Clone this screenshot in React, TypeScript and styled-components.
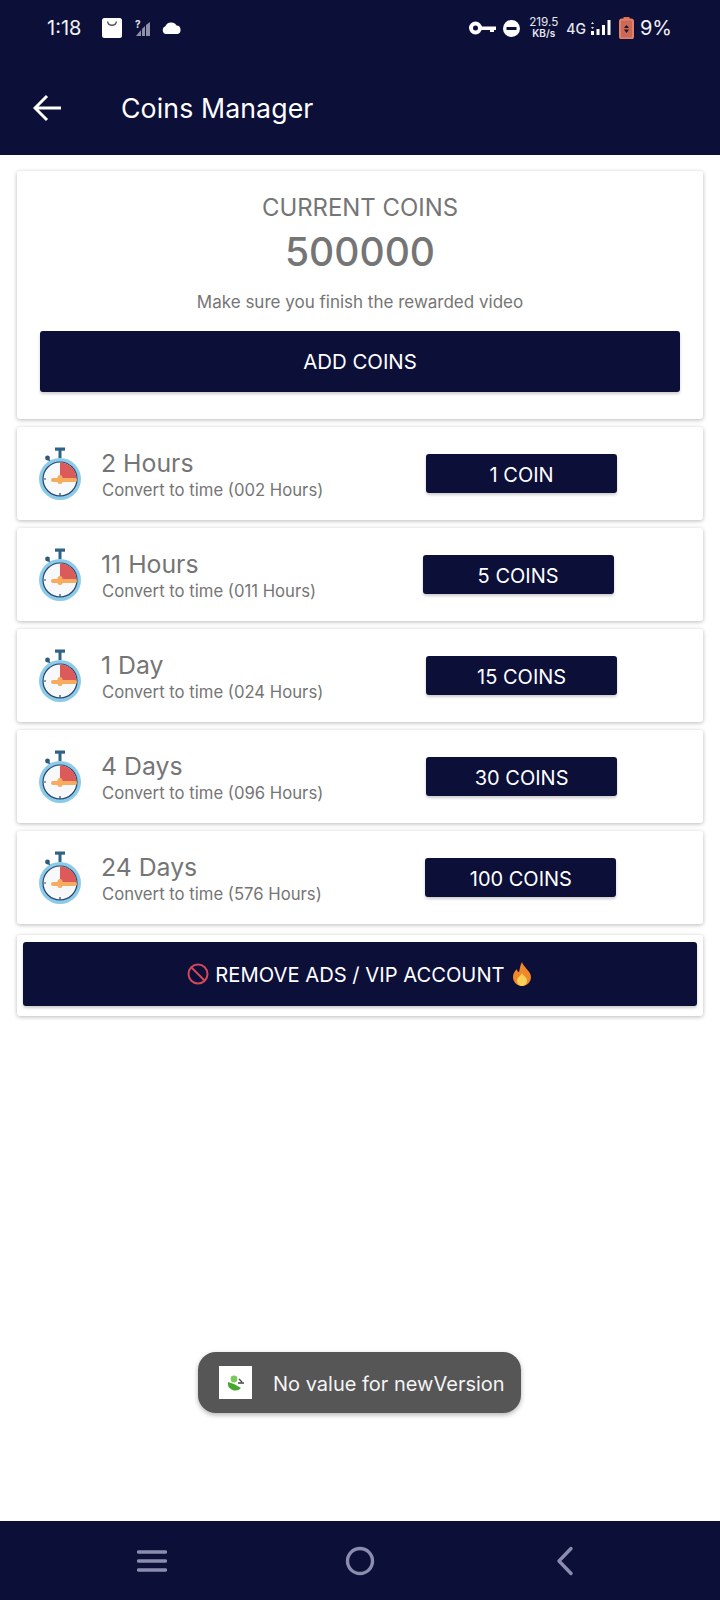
import React from 'react'
import styled, { createGlobalStyle } from 'styled-components'

const NAVY = '#0c0f38'
const GREY = '#757575'

const GlobalStyle = createGlobalStyle`
  html, body { margin: 0; padding: 0; background: #fff; }
  * { box-sizing: border-box; }
`

const Screen = styled.div`
  position: relative;
  width: 720px;
  height: 1600px;
  display: flex;
  flex-direction: column;
  background: #fff;
  font-family: Inter, "Liberation Sans", sans-serif;
`

const Header = styled.header`
  height: 155px;
  background: ${NAVY};
  color: #fff;
`

const StatusBar = styled.div`
  height: 56px;
  padding: 0 48px 0 47px;
  display: flex;
  align-items: center;
  justify-content: space-between;
`

const StatusGroup = styled.div`
  display: flex;
  align-items: center;
`

const Clock = styled.span`
  font-size: 20px;
  width: 55px;
  color: #f2f2f6;
`

const NetSpeed = styled.span`
  display: flex;
  flex-direction: column;
  align-items: center;
  font-size: 11.7px;
  line-height: 11px;
  margin: 0 8px 0 9px;
  color: #e8e8f0;
  small { font-size: 10px; font-weight: 600; }
`

const NetType = styled.span`
  font-size: 14px;
  font-weight: 500;
  color: #e8e8f0;
  margin-right: 4px;
`

const Percent = styled.span`
  font-size: 20px;
  color: #f2f2f6;
  margin-left: 6px;
`

const TitleBar = styled.div`
  height: 99px;
  padding: 5px 0 0 33px;
  display: flex;
  align-items: center;
`

const Title = styled.h1`
  margin: 0 0 0 58px;
  font-size: 26.7px;
  font-weight: 400;
  letter-spacing: 0.1px;
`

const Content = styled.main`
  flex: 1;
  padding: 16px 17px 0;
  display: flex;
  flex-direction: column;
  gap: 8px;
`

const Card = styled.section`
  background: #fff;
  border-radius: 3px;
  box-shadow: 0 1px 4px rgba(0, 0, 0, 0.28);
`

const CoinsCard = styled(Card)`
  height: 248px;
  padding: 22px 23px 0;
  display: flex;
  flex-direction: column;
  align-items: center;
  color: ${GREY};
`

const CoinsLabel = styled.div`
  font-size: 23.9px;
  line-height: 30px;
`

const CoinsValue = styled.div`
  font-size: 39px;
  font-weight: 500;
  line-height: 50px;
  margin-top: 4px;
`

const CoinsHint = styled.div`
  font-size: 17px;
  line-height: 22px;
  margin-top: 14px;
`

const PrimaryButton = styled.button`
  border: 0;
  background: ${NAVY};
  color: #fff;
  border-radius: 3px;
  font-family: Inter, "Liberation Sans", sans-serif;
  font-weight: 400;
  padding: 0;
  display: flex;
  align-items: center;
  justify-content: center;
  box-shadow: 0 2px 3px rgba(0, 0, 0, 0.2);
`

const AddButton = styled(PrimaryButton)`
  width: 100%;
  height: 61px;
  margin-top: 18px;
  font-size: 20.4px;
`

const Row = styled(Card)`
  height: 93px;
  padding: 0 0 0 21px;
  display: flex;
  align-items: center;
`

const RowText = styled.div`
  margin: 2px 0 0 19px;
  color: ${GREY};
`

const RowTitle = styled.div`
  font-size: 24.8px;
  line-height: 31px;
`

const RowSub = styled.div`
  font-size: 16.7px;
  line-height: 23px;
  margin-left: 1px;
`

const RowAction = styled.div`
  flex: 1;
  margin-left: 17px;
  display: flex;
  justify-content: center;
`

const CoinButton = styled(PrimaryButton)`
  width: 191px;
  height: 39px;
  padding-top: 2px;
  font-size: 20px;
`

const VipCard = styled(Card)`
  height: 81px;
  padding: 7px 6px 10px;
  margin-top: 3px;
`

const VipButton = styled(PrimaryButton)`
  width: 100%;
  height: 64px;
  gap: 6px;
  font-size: 20.2px;
`

const Toast = styled.div`
  position: absolute;
  left: 198px;
  top: 1352px;
  width: 323px;
  height: 61px;
  padding: 2px 0 0 21px;
  display: flex;
  align-items: center;
  gap: 21px;
  background: #565656;
  border-radius: 18px;
  color: #f4f4f4;
  font-size: 20px;
  box-shadow: 0 2px 5px rgba(0, 0, 0, 0.3);
`

const ToastIcon = styled.div`
  width: 33px;
  height: 33px;
  margin-top: -2px;
  background: #fff;
  display: flex;
  align-items: center;
  justify-content: center;
`

const NavBar = styled.nav`
  height: 79px;
  background: ${NAVY};
  display: grid;
  grid-template-columns: 303px 114px 295px;
  align-items: center;
  justify-items: center;
`

const StopwatchIcon = () => (
  <svg width="44" height="54" viewBox="0 0 44 54">
    <rect x="17" y="0.5" width="10" height="3.2" fill="#2f6284" />
    <rect x="20.5" y="3" width="3" height="8" fill="#2f6284" />
    <circle cx="9.5" cy="11" r="2.4" fill="#2f5a78" />
    <path d="M9.5 11 L12.5 15" stroke="#2f5a78" strokeWidth="1.6" />
    <circle cx="22" cy="32" r="21" fill="#8ccaea" />
    <circle cx="22" cy="32" r="17" fill="#f6f8fa" stroke="#26466a" strokeWidth="1.2" />
    <path d="M22 15.5 A16.5 16.5 0 0 1 38.5 32 L22 32 Z" fill="#dc5a5a" />
    <path d="M22 46 V49 M6 32 H8 M36 32 H38" stroke="#26466a" strokeWidth="1.2" />
    <path d="M15 33 H37" stroke="#f7ab5e" strokeWidth="4" strokeLinecap="round" />
    <rect x="19.5" y="28" width="5" height="9" rx="2.5" fill="#f7ab5e" />
  </svg>
)

const rows = [
  { title: '2 Hours', sub: 'Convert to time (002 Hours)', coins: '1 COIN' },
  { title: '11 Hours', sub: 'Convert to time (011 Hours)', coins: '5 COINS' },
  { title: '1 Day', sub: 'Convert to time (024 Hours)', coins: '15 COINS' },
  { title: '4 Days', sub: 'Convert to time (096 Hours)', coins: '30 COINS' },
  { title: '24 Days', sub: 'Convert to time (576 Hours)', coins: '100 COINS' },
]

const App: React.FC = () => (
  <Screen>
    <GlobalStyle />
    <Header>
      <StatusBar>
        <StatusGroup>
          <Clock>1:18</Clock>
          <svg width="20" height="20" viewBox="0 0 20 20">
            <rect width="20" height="20" rx="2.5" fill="#fff" />
            <path d="M5.5 3.5 C6.5 8.5 13.5 8.5 14.5 3.5" fill="none" stroke="#555" strokeWidth="1.3" />
          </svg>
          <svg width="16" height="24" viewBox="0 0 16 24" style={{ marginLeft: 13 }}>
            <text x="0" y="12" fontSize="10" fontWeight="700" fill="#e8e8f0" fontFamily="Inter">?</text>
            <path d="M1 20 L6 14 V20 Z" fill="#8f90a8" />
            <path d="M7 20 V13 L10 10 V20 Z" fill="#8f90a8" />
            <path d="M11 20 V9 L15 6 V20 Z" fill="#8f90a8" />
          </svg>
          <svg width="21" height="14" viewBox="0 0 21 14" style={{ marginLeft: 10 }}>
            <path d="M5 13 A4 4 0 0 1 4.4 5.3 A6.2 6.2 0 0 1 15.6 4.6 A4.3 4.3 0 0 1 16.5 13 Z" fill="#fff" />
          </svg>
        </StatusGroup>
        <StatusGroup>
          <svg width="27" height="14" viewBox="0 0 27 14">
            <circle cx="6.5" cy="7" r="4.5" fill="none" stroke="#fff" strokeWidth="4" />
            <path d="M11 5.5 H27 V9 H25 V11 H21 V9 H11 Z" fill="#fff" />
          </svg>
          <svg width="17" height="17" viewBox="0 0 17 17" style={{ marginLeft: 7 }}>
            <circle cx="8.5" cy="8.5" r="8.5" fill="#fff" />
            <rect x="3.5" y="7" width="10" height="3" fill={NAVY} />
          </svg>
          <NetSpeed>
            219.5
            <small>KB/s</small>
          </NetSpeed>
          <NetType>4G</NetType>
          <svg width="21" height="18" viewBox="0 0 21 18">
            <path d="M1 5 L2.5 3 L4 5 Z M1 8 H4 L2.5 10 Z" fill="#e8e8f0" />
            <rect x="1" y="12" width="3" height="4" fill="#fff" />
            <rect x="6.5" y="10" width="3" height="6" fill="#fff" />
            <rect x="12" y="6" width="3" height="10" fill="#fff" />
            <rect x="17.5" y="1" width="3" height="15" fill="#fff" />
          </svg>
          <svg width="15" height="22" viewBox="0 0 15 22" style={{ marginLeft: 8 }}>
            <rect x="4.5" y="0" width="6" height="2.5" fill="#e06a50" />
            <rect x="1" y="2.5" width="13" height="19" rx="2" fill="#c96a58" stroke="#e58068" strokeWidth="2" />
            <path d="M7.5 8 L10 11 H5 Z M7.5 16 L5 12.5 H10 Z" fill="#2a1020" />
          </svg>
          <Percent>9%</Percent>
        </StatusGroup>
      </StatusBar>
      <TitleBar>
        <svg width="30" height="28" viewBox="0 0 30 28">
          <path d="M14 2 L2 14 L14 26 M2 14 H28" fill="none" stroke="#fff" strokeWidth="3" />
        </svg>
        <Title>Coins Manager</Title>
      </TitleBar>
    </Header>

    <Content>
      <CoinsCard>
        <CoinsLabel>CURRENT COINS</CoinsLabel>
        <CoinsValue>500000</CoinsValue>
        <CoinsHint>Make sure you finish the rewarded video</CoinsHint>
        <AddButton>ADD COINS</AddButton>
      </CoinsCard>

      {rows.map(row => (
        <Row key={row.title}>
          <StopwatchIcon />
          <RowText>
            <RowTitle>{row.title}</RowTitle>
            <RowSub>{row.sub}</RowSub>
          </RowText>
          <RowAction>
            <CoinButton>{row.coins}</CoinButton>
          </RowAction>
        </Row>
      ))}

      <VipCard>
        <VipButton>
          <svg width="22" height="24" viewBox="0 0 22 24">
            <circle cx="11" cy="12" r="9.5" fill="none" stroke="#d0485a" strokeWidth="2" />
            <path d="M4.5 5.5 L17.5 18.5" stroke="#d0485a" strokeWidth="2" />
          </svg>
          REMOVE ADS / VIP ACCOUNT
          <svg width="22" height="24" viewBox="0 0 22 24">
            <path d="M11 0 C12 5 20 9 20 15 C20 20 16 24 11 24 C6 24 2 20 2 15 C2 11 4 9 6 7 C6 9 7 10 8 10 C9 7 9 3 11 0 Z" fill="#f0882a" />
            <path d="M11 11 C12 14 16 15 16 18.5 C16 21.5 14 24 11 24 C8 24 6 21.5 6 18.5 C6 15.5 10 14 11 11 Z" fill="#fbd058" />
          </svg>
        </VipButton>
      </VipCard>
    </Content>

    <Toast>
      <ToastIcon>
        <svg width="20" height="20" viewBox="0 0 20 20">
          <path d="M2 9 A7.5 7 0 0 0 15 15 L8 11 Z" fill="#46a82e" />
          <circle cx="8" cy="6" r="3.4" fill="#7cc85a" />
          <path d="M12 10 H18 M13 6 L16 9" stroke="#444" strokeWidth="1.3" />
        </svg>
      </ToastIcon>
      No value for newVersion
    </Toast>

    <NavBar>
      <svg width="30" height="24" viewBox="0 0 30 24">
        <path d="M1.5 3 H28.5 M1.5 12 H28.5 M1.5 21 H28.5" stroke="#8b8daf" strokeWidth="3.4" strokeLinecap="round" />
      </svg>
      <svg width="30" height="30" viewBox="0 0 30 30">
        <circle cx="15" cy="15" r="12.5" fill="none" stroke="#8b8daf" strokeWidth="3.4" />
      </svg>
      <svg width="20" height="30" viewBox="0 0 20 30">
        <path d="M16 2.5 L4 15 L16 27.5" fill="none" stroke="#8b8daf" strokeWidth="3.4" strokeLinecap="round" strokeLinejoin="round" />
      </svg>
    </NavBar>
  </Screen>
)

export default App
